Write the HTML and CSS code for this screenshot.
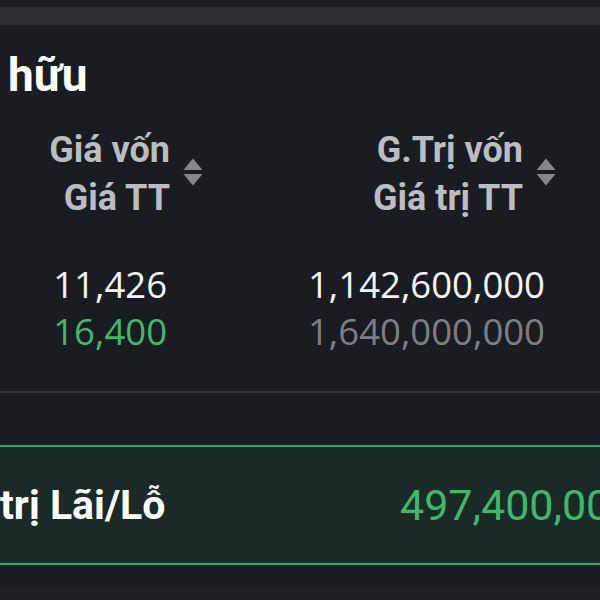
FILE: index.html
```html
<!DOCTYPE html>
<html lang="vi">
<head>
    <meta charset="UTF-8">
    <meta name="viewport" content="width=device-width, initial-scale=1.0">
    <title>Danh mục sở hữu</title>
    <link rel="stylesheet" href="styles.css">
</head>
<body>

<div class="top-bar"></div>

<h1 class="title">hữu</h1>

<div class="holdings">
    <div class="col col-price">
        <div class="col-head">
            <div class="head-text">
                <div>Giá vốn</div>
                <div>Giá TT</div>
            </div>
            <svg class="sort-icon" viewBox="0 0 20 28" width="20" height="28">
                <path d="M10 0.5 L19.5 12 L0.5 12 Z" />
                <path d="M0.5 16 L19.5 16 L10 27.5 Z" />
            </svg>
        </div>
        <div class="cell">11,426</div>
        <div class="cell up">16,400</div>
    </div>
    <div class="col col-value">
        <div class="col-head">
            <div class="head-text">
                <div>G.Trị vốn</div>
                <div>Giá trị TT</div>
            </div>
            <svg class="sort-icon" viewBox="0 0 20 28" width="20" height="28">
                <path d="M10 0.5 L19.5 12 L0.5 12 Z" />
                <path d="M0.5 16 L19.5 16 L10 27.5 Z" />
            </svg>
        </div>
        <div class="cell">1,142,600,000</div>
        <div class="cell muted">1,640,000,000</div>
    </div>
</div>

<div class="divider"></div>

<div class="summary">
    <div class="summary-label">trị Lãi/Lỗ</div>
    <div class="summary-value">497,400,000</div>
</div>

<div class="bottom-bar"></div>

</body>
</html>
```

FILE: styles.css
```css
body {
    margin: 0;
    padding: 0;
    width: 600px;
    height: 600px;
    overflow: hidden;
    background-color: #1b1c21;
    font-family: Roboto, "Liberation Sans", sans-serif;
    color: #f4f4f5;
}
.top-bar {
    height: 18px;
    margin-top: 7px;
    background-color: #2e2f35;
}
.title {
    margin: 25px 0 0 8px;
    font-size: 46px;
    line-height: 50px;
    font-weight: bold;
    color: #ffffff;
}
.holdings {
    display: grid;
    grid-template-columns: 210px 360px;
    margin-top: 26px;
}
.col-head {
    display: flex;
    justify-content: flex-end;
    align-items: center;
    gap: 13px;
    margin-bottom: 39px;
}
.col-price .col-head {
    padding-right: 7px;
}
.col-value .col-head {
    padding-right: 14px;
}
.head-text {
    text-align: right;
    font-size: 36px;
    line-height: 48px;
    font-weight: bold;
    color: #bcbdc1;
}
.sort-icon {
    fill: #86878c;
    margin-top: -4px;
}
.cell {
    text-align: right;
    font-family: "Open Sans", "DejaVu Sans", sans-serif;
    font-size: 36.5px;
    line-height: 47px;
    color: #f4f4f5;
}
.col-price .cell {
    padding-right: 43px;
}
.col-value .cell {
    padding-right: 25px;
}
.cell.up {
    color: #3dba69;
}
.cell.muted {
    color: #7d7e83;
}
.divider {
    height: 2px;
    margin-top: 36px;
    background-color: #36373c;
}
.summary {
    display: grid;
    grid-template-columns: 400px auto;
    align-items: center;
    height: 116px;
    margin-top: 52px;
    border-top: 2px solid #3aa566;
    border-bottom: 2px solid #3aa566;
    background-color: #1b2a27;
    white-space: nowrap;
}
.summary-label {
    font-size: 41px;
    font-weight: bold;
    color: #ffffff;
}
.summary-value {
    font-size: 43px;
    color: #3dba69;
}
.bottom-bar {
    height: 20px;
    margin-top: 23px;
    background-color: #202126;
}
```
